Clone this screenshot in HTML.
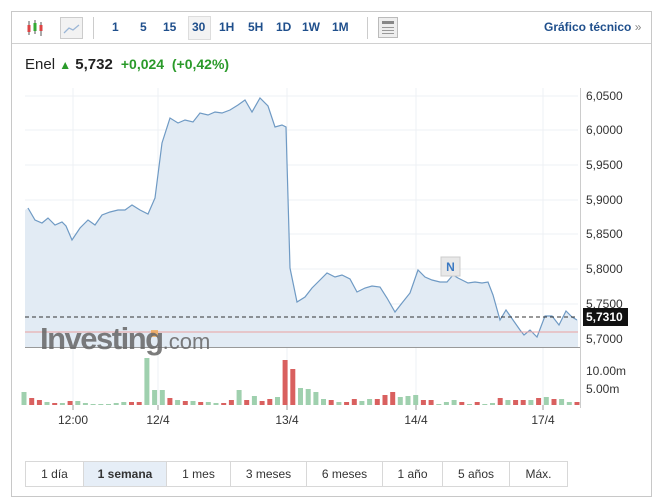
<!DOCTYPE html>
<html><head><meta charset="utf-8"><style>
body{margin:0;background:#fff;font-family:"Liberation Sans",sans-serif;}
.box{position:absolute;left:11px;top:11px;width:639px;height:484px;border:1px solid #c8c8c8;}
.tb{position:absolute;left:0;top:0;width:639px;height:31px;border-bottom:1px solid #d0d0d0;}
.tb span{position:absolute;top:8px;font-size:12px;font-weight:bold;color:#1f4f8c;}
.btns{position:absolute;left:25px;top:461px;height:24px;border:1px solid #d8d8d8;display:flex;}
.btns div{height:24px;line-height:24px;text-align:center;font-size:12px;color:#333;border-right:1px solid #d8d8d8;}
</style></head><body>
<div class="box">
<div class="tb">
<svg style="position:absolute;left:14px;top:6px" width="20" height="20"><line x1="3" y1="3" x2="3" y2="17" stroke="#555"/><rect x="1.5" y="7" width="3" height="7" fill="#d44"/><line x1="9" y1="2" x2="9" y2="16" stroke="#555"/><rect x="7.5" y="5" width="3" height="8" fill="#3a3"/><line x1="15" y1="4" x2="15" y2="18" stroke="#555"/><rect x="13.5" y="7" width="3" height="6" fill="#d44"/></svg>
<div style="position:absolute;left:48px;top:5px;width:21px;height:20px;border:1px solid #ccc;background:#f2f2f2"><svg width="21" height="20"><polyline points="3,15 8,10 12,12 18,7" fill="none" stroke="#9bb6d6" stroke-width="1.3"/></svg></div>
<div style="position:absolute;left:81px;top:5px;width:1px;height:22px;background:#ccc"></div>
<span style="left:100px">1</span><span style="left:128px">5</span><span style="left:151px">15</span>
<div style="position:absolute;left:176px;top:4px;width:21px;height:22px;border:1px solid #ddd;background:#f3f3f3"></div>
<span style="left:180px">30</span><span style="left:207px">1H</span><span style="left:236px">5H</span><span style="left:264px">1D</span><span style="left:290px">1W</span><span style="left:320px">1M</span>
<div style="position:absolute;left:355px;top:5px;width:1px;height:22px;background:#ccc"></div>
<div style="position:absolute;left:366px;top:5px;width:18px;height:19px;border:1px solid #bbb;background:#eee"><div style="margin:3px;height:3px;background:#888"></div><div style="margin:2px 3px;height:8px;background:repeating-linear-gradient(#999 0 1px,#eee 1px 3px)"></div></div>
<span style="left:532px;font-size:12px">Gráfico técnico <span style="position:static;color:#888;font-weight:normal">»</span></span>
</div>
<div style="position:absolute;left:13px;top:44px;font-size:15px;color:#222">Enel <span style="color:#2a9a2a;font-size:12px">&#9650;</span> <b>5,732</b> <b style="color:#2a9a2a;font-size:14px">&nbsp;+0,024&nbsp; (+0,42%)</b></div>
</div>
<svg id="ch" style="position:absolute;left:0;top:0" width="659" height="503"></svg>
<div style="position:absolute;left:40px;top:321px;font-size:31px;font-weight:bold;color:#666;letter-spacing:-1.5px;opacity:.85">Investing<span style="font-weight:normal;font-size:22px;letter-spacing:0">.com</span></div>
<div class="btns">
<div style="width:57px">1 día</div><div style="width:82px;background:#e6eef7;font-weight:bold">1 semana</div><div style="width:63px">1 mes</div><div style="width:75px">3 meses</div><div style="width:75px">6 meses</div><div style="width:59px">1 año</div><div style="width:66px">5 años</div><div style="width:57px;border:0">Máx.</div>
</div>
<script>
var s='';
var pts=[[28,208],[35,220],[42,223],[48,218],[55,225],[62,222],[66,226],[72,240],[80,228],[88,220],[95,225],[102,215],[110,212],[118,210],[125,210],[132,205],[140,210],[148,214],[155,198],[162,143],[170,118],[178,123],[185,120],[193,122],[200,113],[208,115],[215,112],[222,113],[230,110],[238,105],[245,100],[252,112],[260,98],[268,106],[275,127],[282,125],[286,127],[290,268],[297,302],[305,297],[312,288],[320,280],[327,273],[335,277],[342,275],[350,279],[357,292],[365,288],[372,286],[380,287],[387,298],[395,312],[402,303],[410,293],[418,270],[425,277],[432,280],[440,282],[447,282],[453,275],[458,278],[462,280],[468,283],[475,282],[482,283],[488,282],[493,295],[500,320],[506,310],[513,320],[520,330],[524,335],[530,330],[537,337],[545,316],[552,316],[559,325],[566,311],[572,317],[577,320]];
[96,130,165,200,234,269,304,339].forEach(y=>s+='<line x1="25" x2="578" y1="'+y+'" y2="'+y+'" stroke="#eef1f4"/>');
[73,158,287,416,543].forEach(x=>s+='<line x1="'+x+'" x2="'+x+'" y1="88" y2="408" stroke="#eef1f4"/><line x1="'+x+'" x2="'+x+'" y1="405" y2="410" stroke="#999"/>');
var p=pts.map(a=>a.join(',')).join(' ');
s+='<polygon points="25,210 '+p+' 578,320 578,347 25,347" fill="#e2ebf4"/>';
s+='<polyline points="'+p+'" fill="none" stroke="#6f9ac4" stroke-width="1.2"/>';
s+='<line x1="25" x2="578" y1="332" y2="332" stroke="#e9a0a0"/>';
s+='<line x1="25" x2="578" y1="317" y2="317" stroke="#333" stroke-dasharray="4,3"/>';
s+='<line x1="25" x2="580" y1="347.5" y2="347.5" stroke="#999"/>';
s+='<line x1="580.5" x2="580.5" y1="88" y2="408" stroke="#ccc"/>';
var lab=[['6,0500',96],['6,0000',130],['5,9500',165],['5,9000',200],['5,8500',234],['5,8000',269],['5,7500',304],['5,7000',339]];
lab.forEach(l=>s+='<text x="586" y="'+(l[1]+4)+'" font-size="12" fill="#333" font-family="Liberation Sans">'+l[0]+'</text>');
s+='<rect x="583" y="308" width="45" height="18" fill="#111"/><text x="586" y="321" font-size="12" font-weight="bold" fill="#fff" font-family="Liberation Sans">5,7310</text>';
s+='<text x="586" y="375" font-size="12" fill="#333" font-family="Liberation Sans">10.00m</text><text x="586" y="393" font-size="12" fill="#333" font-family="Liberation Sans">5.00m</text>';
var v='13g7r5r3g2r2g4r4g2g1g1g1g2g3g3r3r47g15g15g7r5g4r4g3r3g2g2r5r15g5r9g4r6r8g45r36r17g16g13g6g5r3g3r6r4g6g6r10r13r8g9g10g5r5r1g3g5g3r1g3r1g2g7r5g5r5r5g7r8g6r6g3g3r';
var arr=v.match(/\d+[gr]/g),n=arr.length,dx=(577-24)/(n-1);
arr.forEach((b,i)=>{var h=parseInt(b),c=b.slice(-1)=='g'?'#9fd0ae':'#d9605f';var x=24+i*dx-2.5;s+='<rect x="'+x.toFixed(1)+'" y="'+(405-h)+'" width="5" height="'+h+'" fill="'+c+'"/>';});
[['12:00',73],['12/4',158],['13/4',287],['14/4',416],['17/4',543]].forEach(l=>s+='<text x="'+l[1]+'" y="424" text-anchor="middle" font-size="12" fill="#333" font-family="Liberation Sans">'+l[0]+'</text>');
s+='<rect x="441" y="257" width="19" height="19" fill="#e8e8e8" stroke="#ccc"/><text x="450.5" y="271" text-anchor="middle" font-size="12" font-weight="bold" fill="#3b79c2" font-family="Liberation Sans">N</text>';
s+='<rect x="151" y="330" width="7" height="7" fill="#f0a040" opacity=".7"/>';
document.getElementById('ch').innerHTML=s;
</script>
</body></html>
